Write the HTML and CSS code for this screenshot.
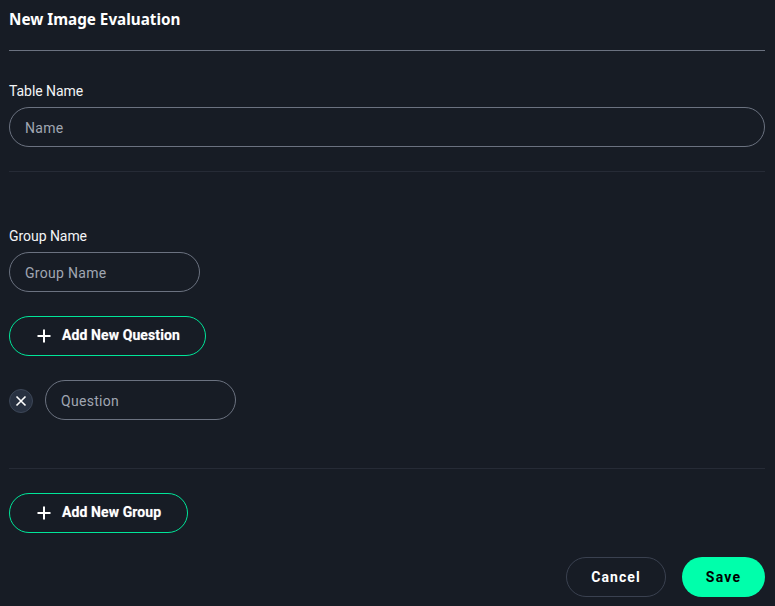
FILE: index.html
```html
<!DOCTYPE html>
<html lang="en">
<head>
<meta charset="utf-8">
<title>New Image Evaluation</title>
<link rel="stylesheet" href="styles.css">
</head>
<body>
<form class="page">
  <header class="head"><h1 class="title">New Image Evaluation</h1></header>
  <section class="table-section">
    <label class="field">
      <span class="label">Table Name</span>
      <input class="input" type="text" placeholder="Name">
    </label>
  </section>
  <section class="group-section">
    <label class="field">
      <span class="label">Group Name</span>
      <input class="input input-short" type="text" placeholder="Group Name">
    </label>
    <button class="btn btn-add btn-question" type="button">
      <svg class="plus" width="14" height="14" viewBox="0 0 14 14" aria-hidden="true"><path d="M7 .5v13M.5 7h13"/></svg>
      <span class="btn-text">Add New Question</span>
    </button>
    <div class="question">
      <button class="remove" type="button" aria-label="Remove">
        <svg width="12" height="12" viewBox="0 0 12 12" aria-hidden="true"><path d="M1.5 1.5l9 9M10.500 1.500l-9 9"/></svg>
      </button>
      <input class="input input-short" type="text" placeholder="Question">
    </div>
  </section>
  <section class="add-group">
    <button class="btn btn-add btn-group" type="button">
      <svg class="plus" width="14" height="14" viewBox="0 0 14 14" aria-hidden="true"><path d="M7 .5v13M.5 7h13"/></svg>
      <span class="btn-text">Add New Group</span>
    </button>
  </section>
  <footer class="actions">
    <button class="btn btn-cancel" type="button">Cancel</button>
    <button class="btn btn-save" type="button">Save</button>
  </footer>
</form>
</body>
</html>
```
FILE: styles.css
```css
* { box-sizing: border-box; }
html, body { margin: 0; height: 100%; }
body {
  background: #171c25;
  color: #fff;
  font-family: Roboto, sans-serif;
  overflow: hidden;
}
.page {
  display: flex;
  flex-direction: column;
  padding: 0 10px 0 9px;
}
.head {
  height: 51px;
  border-bottom: 1px solid #6b7280;
  padding-top: 10px;
}
.title {
  margin: 0;
  font-family: "Noto Sans", sans-serif;
  font-size: 15.25px;
  font-weight: 700;
  line-height: 19px;
}
.table-section {
  padding-top: 32px;
  height: 121px;
  border-bottom: 1px solid #262b36;
}
.field { display: flex; flex-direction: column; align-items: flex-start; }
.label {
  font-size: 14px;
  line-height: 17px;
  height: 24px;
  color: #f3f4f6;
  letter-spacing: -.05px;
}
.input {
  display: block;
  width: 100%;
  height: 40px;
  padding: 2px 15px 0;
  border: 1px solid #6b7280;
  border-radius: 20px;
  background: transparent;
  color: #fff;
  font: 400 14px Roboto, sans-serif;
  letter-spacing: .3px;
  outline: none;
}
.input::placeholder { color: #a0a6b2; opacity: 1; }
.input-short { width: 191px; }
.group-section {
  display: flex;
  flex-direction: column;
  align-items: flex-start;
  gap: 24px;
  padding-top: 56px;
  height: 297px;
  border-bottom: 1px solid #262b36;
}
.btn {
  height: 40px;
  border-radius: 20px;
  font: 700 14px Roboto, sans-serif;
  color: #fff;
  background: transparent;
  cursor: pointer;
}
.btn-add {
  display: flex;
  align-items: center;
  justify-content: flex-start;
  gap: 11px;
  border: 1px solid #00e599;
  padding: 0 0 0 27px;
}
.btn-text {
  position: relative;
  top: -1px;
  letter-spacing: .1px;
  text-shadow: 0 0 1px rgba(255, 255, 255, .45);
}
.btn-question { width: 197px; }
.btn-group { width: 179px; }
.plus { stroke: #fff; stroke-width: 2; fill: none; }
.question { display: flex; align-items: center; gap: 12px; }
.remove {
  display: flex;
  align-items: center;
  justify-content: center;
  width: 24px;
  height: 24px;
  margin-top: 2px;
  padding: 0;
  border: 1px solid #3c4657;
  border-radius: 50%;
  background: #283141;
}
.remove svg { stroke: #fff; stroke-width: 1.6; fill: none; }
.add-group { padding-top: 24px; }
.actions {
  display: flex;
  justify-content: flex-end;
  gap: 16px;
  padding-top: 24px;
}
.btn-cancel {
  width: 100px;
  border: 1px solid #3a4150;
  letter-spacing: 1.1px;
  padding-bottom: 2px;
}
.btn-save {
  width: 83px;
  border: 0;
  background: #00ffab;
  color: #000;
  letter-spacing: 1.2px;
  padding-bottom: 2px;
}
```
